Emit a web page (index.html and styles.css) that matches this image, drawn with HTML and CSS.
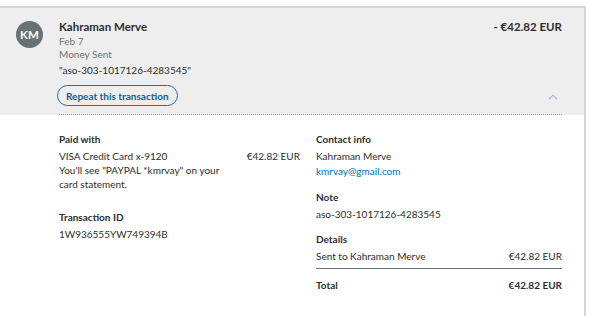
FILE: index.html
```html
<!DOCTYPE html>
<html lang="en">
<head>
    <meta charset="UTF-8">
    <meta name="viewport" content="width=device-width, initial-scale=1.0">
    <title>Transaction details</title>
    <link rel="stylesheet" href="styles.css">
</head>
<body>
    <div class="card">
        <div class="summary">
            <div class="avatar">KM</div>
            <div class="summary-body">
                <div class="summary-top">
                    <div class="summary-info">
                        <div class="name">Kahraman Merve</div>
                        <div class="muted">Feb 7</div>
                        <div class="muted">Money Sent</div>
                        <div class="quote">"aso-303-1017126-4283545"</div>
                    </div>
                    <div class="amount">- €42.82 EUR</div>
                </div>
                <div class="summary-actions">
                    <button class="repeat-btn">Repeat this transaction</button>
                    <svg class="chevron" width="10" height="6" viewBox="0 0 10 6">
                        <path d="M1 5.2 L5 1.2 L9 5.2" fill="none" stroke="#8db5e2" stroke-width="1.1"/>
                    </svg>
                </div>
            </div>
        </div>

        <div class="details">
            <div class="col col-left">
                <div class="block">
                    <div class="label">Paid with</div>
                    <div class="row">
                        <span>VISA Credit Card x-9120</span>
                        <span>€42.82 EUR</span>
                    </div>
                    <div class="hint">You'll see "PAYPAL *kmrvay" on your card statement.</div>
                </div>
                <div class="block">
                    <div class="label">Transaction ID</div>
                    <div class="text">1W936555YW749394B</div>
                </div>
            </div>
            <div class="col col-right">
                <div class="block">
                    <div class="label">Contact info</div>
                    <div class="text">Kahraman Merve</div>
                    <a class="link" href="#">kmrvay@gmail.com</a>
                </div>
                <div class="block">
                    <div class="label">Note</div>
                    <div class="text">aso-303-1017126-4283545</div>
                </div>
                <div class="block">
                    <div class="label">Details</div>
                    <div class="row row-line">
                        <span>Sent to Kahraman Merve</span>
                        <span>€42.82 EUR</span>
                    </div>
                    <div class="row row-total">
                        <span>Total</span>
                        <span>€42.82 EUR</span>
                    </div>
                </div>
            </div>
        </div>
    </div>
</body>
</html>
```

FILE: styles.css
```css
body {
    margin: 0;
    padding: 0;
    background: #fff;
    font-family: 'Lato', 'Noto Sans', sans-serif;
    color: #2c2e2f;
    font-size: 10px;
}

.card {
    width: 584px;
    margin-top: 6px;
    border-top: 2px solid #d6d6d6;
    border-right: 2px solid #d6d6d6;
    height: 308px;
}

.summary {
    display: flex;
    background: #eeeeee;
    padding: 12px 22px 0 16px;
}

.avatar {
    width: 27px;
    height: 27px;
    margin-top: 1px;
    border-radius: 50%;
    background: #687173;
    color: #fff;
    font-weight: bold;
    font-size: 11.5px;
    display: flex;
    align-items: center;
    justify-content: center;
    flex-shrink: 0;
}

.summary-body {
    flex: 1;
    margin-left: 16px;
    border-bottom: 1px dotted #9a9a9a;
}

.summary-top {
    display: flex;
    justify-content: space-between;
}

.name {
    font-size: 11.5px;
    font-weight: bold;
    line-height: 14px;
    margin-bottom: 1px;
}

.muted {
    color: #6c7378;
    line-height: 13px;
}

.quote {
    line-height: 14px;
    margin-top: 2px;
}

.amount {
    font-size: 11.5px;
    font-weight: bold;
    line-height: 14px;
}

.summary-actions {
    display: flex;
    justify-content: space-between;
    align-items: center;
    padding: 8px 0 8px;
}

.repeat-btn {
    font-family: inherit;
    font-size: 10px;
    font-weight: bold;
    color: #0a5fa8;
    background: transparent;
    border: 1.5px solid #1a6fb8;
    border-radius: 11px;
    height: 21px;
    padding: 0 8px;
    margin-left: -2px;
}

.chevron {
    margin-right: 4px;
    margin-top: 2px;
}

.details {
    display: flex;
    padding: 17px 22px 0 59px;
}

.col-left {
    width: 241px;
    margin-right: 16px;
}

.col-right {
    flex: 1;
}

.block {
    margin-bottom: 11px;
}

.label {
    font-weight: bold;
    line-height: 14px;
    margin-bottom: 3px;
}

.text,
.hint,
.row {
    line-height: 14px;
}

.hint {
    width: 170px;
}

.row {
    display: flex;
    justify-content: space-between;
}

.link {
    display: block;
    color: #0070ba;
    text-decoration: none;
    line-height: 16px;
}

.col-left .block:first-child {
    margin-bottom: 19px;
}

.row-line {
    padding-bottom: 5px;
    border-bottom: 1px solid #6c7378;
    margin-bottom: 9px;
}

.row-total {
    font-weight: bold;
}
```
